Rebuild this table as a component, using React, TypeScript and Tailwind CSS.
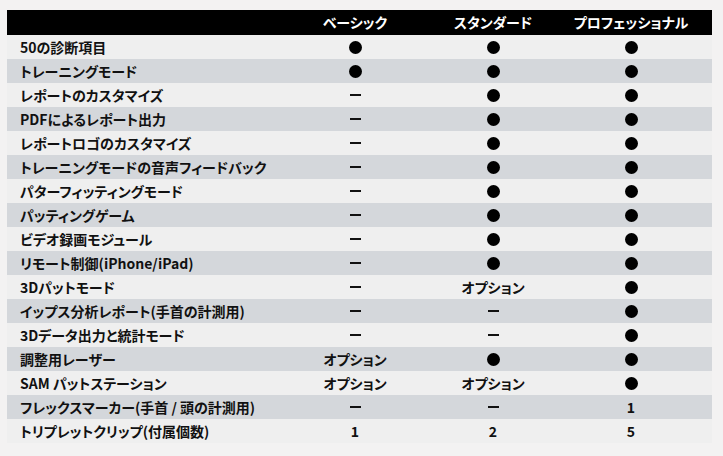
const DOT = "dot";
const DASH = "dash";

type Cell = string;

const rows: [string, Cell, Cell, Cell][] = [
  ["50の診断項目", DOT, DOT, DOT],
  ["トレーニングモード", DOT, DOT, DOT],
  ["レポートのカスタマイズ", DASH, DOT, DOT],
  ["PDFによるレポート出力", DASH, DOT, DOT],
  ["レポートロゴのカスタマイズ", DASH, DOT, DOT],
  ["トレーニングモードの音声フィードバック", DASH, DOT, DOT],
  ["パターフィッティングモード", DASH, DOT, DOT],
  ["パッティングゲーム", DASH, DOT, DOT],
  ["ビデオ録画モジュール", DASH, DOT, DOT],
  ["リモート制御(iPhone/iPad)", DASH, DOT, DOT],
  ["3Dパットモード", DASH, "オプション", DOT],
  ["イップス分析レポート(手首の計測用)", DASH, DASH, DOT],
  ["3Dデータ出力と統計モード", DASH, DASH, DOT],
  ["調整用レーザー", "オプション", DOT, DOT],
  ["SAM パットステーション", "オプション", "オプション", DOT],
  ["フレックスマーカー(手首 / 頭の計測用)", DASH, DASH, "1"],
  ["トリプレットクリップ(付属個数)", "1", "2", "5"],
];

function Value({ v }: { v: Cell }) {
  if (v === DOT) return <span className="block h-[13px] w-[13px] rounded-full bg-black" />;
  if (v === DASH) return <span className="block h-[2px] w-[11px] bg-[#111]" />;
  return <span>{v}</span>;
}

const grid = "grid grid-cols-[278px_140px_136px_140px_1fr] items-center";

export default function App() {
  return (
    <div
      className="h-[456px] w-[723px] bg-[#f3f2f2] px-[7px] pt-[10px] text-[14px] font-bold text-[#111] [font-feature-settings:'palt']"
      style={{ fontFamily: '"Noto Sans CJK JP", "Noto Sans", sans-serif' }}
    >
      <div className="w-[705px]">
        <div className={`${grid} h-[25px] bg-black text-white`}>
          <div />
          <div className="text-center">ベーシック</div>
          <div className="text-center">スタンダード</div>
          <div className="text-center">プロフェッショナル</div>
          <div />
        </div>
        {rows.map(([label, a, b, c], i) => (
          <div
            key={label}
            className={`${grid} h-[24px] ${i % 2 === 0 ? "bg-[#efefef]" : "bg-[#d4d7db]"}`}
          >
            <div className="pl-[13px] leading-none">{label}</div>
            <div className="flex justify-center leading-none">
              <Value v={a} />
            </div>
            <div className="flex justify-center leading-none">
              <Value v={b} />
            </div>
            <div className="flex justify-center leading-none">
              <Value v={c} />
            </div>
            <div />
          </div>
        ))}
      </div>
    </div>
  );
}
